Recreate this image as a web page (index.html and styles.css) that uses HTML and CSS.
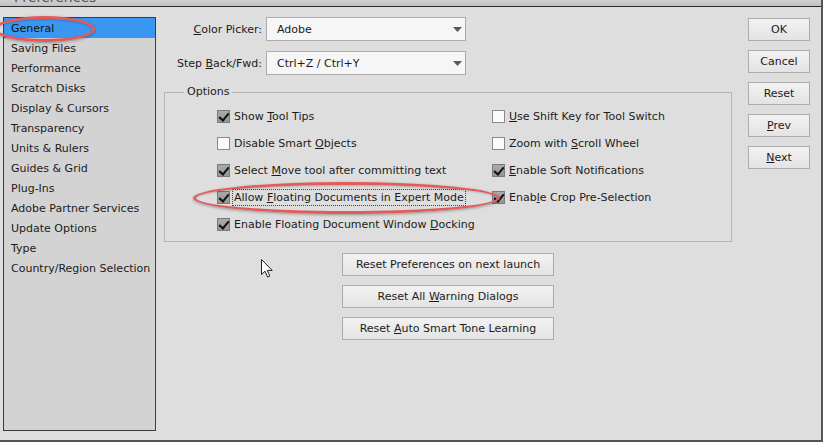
FILE: index.html
```html
<!DOCTYPE html>
<html>
<head>
<meta charset="utf-8">
<link rel="stylesheet" href="styles.css">
</head>
<body>
<div class="window">
  <div class="titlebar"><span class="title">Preferences</span></div>
  <div class="content">
    <ul class="sidebar">
      <li class="selected">General</li>
      <li>Saving Files</li>
      <li>Performance</li>
      <li>Scratch Disks</li>
      <li>Display &amp; Cursors</li>
      <li>Transparency</li>
      <li>Units &amp; Rulers</li>
      <li>Guides &amp; Grid</li>
      <li>Plug-Ins</li>
      <li>Adobe Partner Services</li>
      <li>Update Options</li>
      <li>Type</li>
      <li>Country/Region Selection</li>
    </ul>

    <div class="main">
      <div class="field">
        <label class="field-label"><u>C</u>olor Picker:</label>
        <div class="select"><span>Adobe</span><svg class="arrow" width="9" height="5" viewBox="0 0 9 5"><path d="M0 0H9L4.5 5Z" fill="#5a5a5a"/></svg></div>
      </div>
      <div class="field">
        <label class="field-label">Step <u>B</u>ack/Fwd:</label>
        <div class="select"><span>Ctrl+Z / Ctrl+Y</span><svg class="arrow" width="9" height="5" viewBox="0 0 9 5"><path d="M0 0H9L4.5 5Z" fill="#5a5a5a"/></svg></div>
      </div>

      <div class="group">
        <span class="legend">Options</span>
        <div class="options">
          <div class="opt"><span class="cb checked"></span><span>Show <u>T</u>ool Tips</span></div>
          <div class="opt"><span class="cb"></span><span><u>U</u>se Shift Key for Tool Switch</span></div>
          <div class="opt"><span class="cb"></span><span>Disable Smart <u>O</u>bjects</span></div>
          <div class="opt"><span class="cb"></span><span>Zoom with <u>S</u>croll Wheel</span></div>
          <div class="opt"><span class="cb checked"></span><span>Select <u>M</u>ove tool after committing text</span></div>
          <div class="opt"><span class="cb checked"></span><span><u>E</u>nable Soft Notifications</span></div>
          <div class="opt"><span class="cb checked"></span><span class="focus">Allow <u>F</u>loating Documents in Expert Mode</span></div>
          <div class="opt"><span class="cb checked"></span><span>Enab<u>l</u>e Crop Pre-Selection</span></div>
          <div class="opt"><span class="cb checked"></span><span>Enable Floating Document Window <u>D</u>ocking</span></div>
        </div>
      </div>

      <div class="reset-buttons">
        <button class="btn wide">Reset Preferences on next launch</button>
        <button class="btn wide">Reset All <u>W</u>arning Dialogs</button>
        <button class="btn wide">Reset <u>A</u>uto Smart Tone Learning</button>
      </div>
    </div>

    <div class="side-buttons">
      <button class="btn small">OK</button>
      <button class="btn small">Cancel</button>
      <button class="btn small">Reset</button>
      <button class="btn small"><u>P</u>rev</button>
      <button class="btn small"><u>N</u>ext</button>
    </div>
  </div>

  <div class="ellipse e1"></div>
  <div class="ellipse e2"></div>
  <svg class="cursor" width="12" height="19" viewBox="0 0 12 19"><path d="M0.5 0.5V15.5L4 12.2L6.6 18L8.8 17L6.3 11.4H11.2Z" fill="#fff" stroke="#222" stroke-width="1"/></svg>
</div>
</body>
</html>
```

FILE: styles.css
```css
* { box-sizing: border-box; }
html, body { margin: 0; padding: 0; }
body {
  width: 823px;
  height: 442px;
  overflow: hidden;
  background: #dedede;
  font-family: "DejaVu Sans", Tahoma, sans-serif;
  font-size: 11px;
  color: #1b1b1b;
}
u { text-decoration: underline; text-underline-offset: 1px; }
.window {
  position: relative;
  width: 823px;
  height: 442px;
  background: #dedede;
  border-right: 2px solid #555;
  border-bottom: 2px solid #555;
}
.titlebar {
  height: 7px;
  overflow: hidden;
  background: linear-gradient(#cfcfcf, #c2c2c2);
  border-bottom: 1px solid #2a2a2a;
}
.title {
  display: block;
  margin: -11px 0 0 14px;
  font-size: 14px;
  line-height: 16px;
  color: #555;
}
.content {
  display: flex;
  padding-top: 10px;
}
.sidebar {
  list-style: none;
  margin: 0 0 0 3px;
  padding: 0;
  width: 153px;
  height: 414px;
  border: 1px solid #3c3c3c;
  background: #d3d3d3;
}
.sidebar li {
  height: 20px;
  line-height: 21px;
  padding-left: 7px;
  white-space: nowrap;
}
.sidebar li.selected {
  background: #3a98f3;
  color: #111;
}
.main {
  width: 568px;
  margin-left: 8px;
  display: flex;
  flex-direction: column;
}
.field {
  display: flex;
  align-items: center;
  height: 24px;
  margin-bottom: 10px;
}
.field-label {
  width: 98px;
  text-align: right;
  margin-right: 4px;
  white-space: nowrap;
}
.select {
  width: 200px;
  height: 24px;
  background: #f6f6f6;
  border: 1px solid #acacac;
  display: flex;
  align-items: center;
  justify-content: space-between;
  padding: 0 3px 0 10px;
}
.group {
  position: relative;
  margin-top: 7px;
  height: 150px;
  border: 1px solid #b4b4b4;
  padding: 10px 0 0 52px;
}
.legend {
  position: absolute;
  top: -9px;
  left: 19px;
  padding: 0 3px;
  background: #dedede;
  line-height: 16px;
}
.options {
  display: grid;
  grid-template-columns: 275px auto;
  grid-auto-rows: 27px;
}
.opt {
  display: flex;
  align-items: center;
  white-space: nowrap;
}
.cb {
  width: 13px;
  height: 13px;
  margin-right: 4px;
  border: 1px solid #8a8a8a;
  background: #fbfbfb;
  flex: none;
  position: relative;
}
.cb.checked {
  background: linear-gradient(#aaa, #969696);
  border-color: #7a7a7a;
}
.cb.checked::after {
  content: "";
  position: absolute;
  left: 3px;
  top: 0px;
  width: 4px;
  height: 8px;
  border: solid #111;
  border-width: 0 2px 2px 0;
  transform: rotate(40deg);
}
.focus {
  outline: 1px dotted #444;
  outline-offset: 1px;
}
.reset-buttons {
  display: flex;
  flex-direction: column;
  align-items: center;
  gap: 9px;
  margin-top: 11px;
}
.btn {
  font-family: inherit;
  font-size: 11px;
  color: #1b1b1b;
  height: 23px;
  padding: 0;
  border: 1px solid #acacac;
  background: linear-gradient(#f2f2f2, #e3e3e3);
  border-radius: 0;
}
.btn.wide { width: 212px; }
.side-buttons {
  margin-left: 16px;
  display: flex;
  flex-direction: column;
  gap: 9px;
  padding-top: 1px;
}
.btn.small { width: 62px; }
.ellipse {
  position: absolute;
  border: 3px solid #e25a5a;
  border-radius: 50%;
  box-shadow: 0 1px 3px rgba(0,0,0,0.35), inset 0 1px 2px rgba(0,0,0,0.2);
}
.e1 { left: -6px; top: 16px; width: 101px; height: 26px; }
.e2 { left: 193px; top: 182px; width: 307px; height: 32px; }
.cursor {
  position: absolute;
  left: 261px;
  top: 259px;
}
```
